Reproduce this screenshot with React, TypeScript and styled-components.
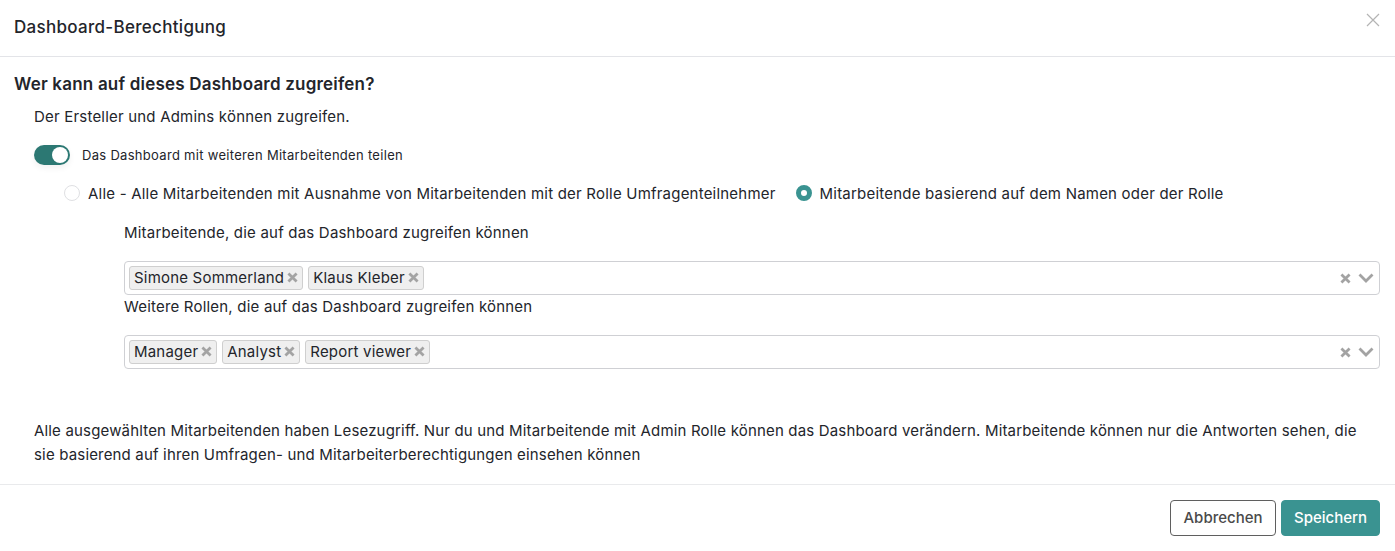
import React from "react";
import styled, { createGlobalStyle } from "styled-components";

const GlobalStyle = createGlobalStyle`
  * {
    box-sizing: border-box;
  }
  body {
    margin: 0;
    background: #fff;
    color: #23252b;
    font-family: Inter, "Liberation Sans", sans-serif;
    -webkit-font-smoothing: antialiased;
  }
`;
const Modal = styled.div`
  display: flex;
  flex-direction: column;
  width: 1395px;
  height: 551px;
  overflow: hidden;
`;
const Header = styled.header`
  display: flex;
  justify-content: space-between;
  align-items: flex-start;
  height: 57px;
  padding: 0 14px;
  border-bottom: 1px solid #e3e4e8;
`;
const Title = styled.h1`
  margin: 17px 0 0;
  font-size: 17px;
  font-weight: 500;
  line-height: 20px;
  letter-spacing: 0.3px;
`;
const CloseButton = styled.button`
  display: flex;
  margin: 13px 1px 0 0;
  padding: 0;
  border: none;
  background: none;
  color: #b4b4b4;
`;
const Body = styled.main`
  flex-grow: 1;
  padding: 16px 14px 0;
`;
const Question = styled.h2`
  margin: 0;
  font-size: 17px;
  font-weight: 600;
  line-height: 22px;
  letter-spacing: 0.2px;
`;
const Indented = styled.div`
  padding-left: 20px;
  font-size: 15px;
  letter-spacing: 0.2px;
`;
const Paragraph = styled.p`
  margin: 11px 0 0;
  line-height: 22px;
`;
const ToggleRow = styled.div`
  display: flex;
  align-items: center;
  gap: 12px;
  margin-top: 17px;
  font-size: 13px;
  letter-spacing: 0.3px;
`;
const Toggle = styled.span`
  display: flex;
  justify-content: flex-end;
  align-items: center;
  width: 36px;
  height: 20px;
  padding: 2px;
  border-radius: 10px;
  background: #2c7873;
  box-shadow: 0 3px 6px rgba(0, 0, 0, 0.06);
`;
const Knob = styled.span`
  width: 16px;
  height: 16px;
  border-radius: 50%;
  background: #fff;
`;
const RadioGroup = styled.div`
  display: flex;
  align-items: center;
  height: 22px;
  margin: 17px 0 0 30px;
  letter-spacing: 0.21px;
`;
const RadioLabel = styled.label`
  display: flex;
  align-items: center;
  gap: 8px;
  margin-right: 20px;
  white-space: nowrap;
`;
const RadioDot = styled.span<{ $checked?: boolean }>`
  width: 16px;
  height: 16px;
  border-radius: 50%;
  background: #fff;
  border: ${p => (p.$checked ? "5px solid #3a9391" : "1px solid #dfe0e3")};
`;
const Fields = styled.div`
  padding-left: 90px;
`;
const FieldLabel = styled.div<{ $first?: boolean }>`
  margin-top: ${p => (p.$first ? "18px" : "1px")};
  line-height: 22px;
`;
const Select = styled.div`
  display: flex;
  align-items: center;
  justify-content: space-between;
  height: 34px;
  margin: 17px 1px 0 0;
  padding: 0 5px 0 4px;
  border: 1px solid #cfd0d4;
  border-radius: 4px;
`;
const Tags = styled.div`
  display: flex;
  gap: 5px;
`;
const Tag = styled.span`
  display: flex;
  align-items: center;
  gap: 3px;
  height: 24px;
  padding: 0 4px 1px;
  border: 1px solid #cfcfcf;
  border-radius: 3px;
  background: #efefef;
  white-space: nowrap;
`;
const SelectIcons = styled.div`
  display: flex;
  align-items: center;
  gap: 7px;
  color: #a3a3a3;
`;
const Notice = styled.p`
  max-width: 1330px;
  margin: 50px 0 0;
  line-height: 24px;
  letter-spacing: 0.17px;
`;
const Footer = styled.footer`
  display: flex;
  justify-content: flex-end;
  gap: 5px;
  height: 67px;
  padding: 15px 15px 0 0;
  border-top: 1px solid #e9eaec;
`;
const Button = styled.button<{ $primary?: boolean }>`
  width: ${p => (p.$primary ? "99px" : "106px")};
  height: 36px;
  padding: 0 0 2px;
  border: 1px solid ${p => (p.$primary ? "#3a9391" : "#5f5f5f")};
  border-radius: 4px;
  background: ${p => (p.$primary ? "#3a9391" : "#fff")};
  color: ${p => (p.$primary ? "#fff" : "#4a4a4a")};
  font-family: inherit;
  font-size: 15px;
  font-weight: 500;
`;
const TagCross = styled.span`
  display: flex;
  color: #a3a3a3;
`;

const Cross = ({ size = 11 }: { size?: number }) => (
  <svg width={size} height={size} viewBox="0 0 10 10" aria-hidden="true">
    <path
      d="M1.3 1.3l7.4 7.4M8.7 1.3l-7.4 7.4"
      stroke="currentColor"
      strokeWidth="2.5"
      fill="none"
    />
  </svg>
);

const MultiSelect = ({ values }: { values: string[] }) => (
  <Select>
    <Tags>
      {values.map(v => (
        <Tag key={v}>
          {v}
          <TagCross>
            <Cross />
          </TagCross>
        </Tag>
      ))}
    </Tags>
    <SelectIcons>
      <Cross />
      <svg width="16" height="10" viewBox="0 0 16 10" aria-hidden="true">
        <path
          d="M1.5 1.5L8 8l6.5-6.5"
          stroke="currentColor"
          strokeWidth="2.8"
          fill="none"
        />
      </svg>
    </SelectIcons>
  </Select>
);

const App = () => (
  <>
    <GlobalStyle />
    <Modal>
      <Header>
        <Title>Dashboard-Berechtigung</Title>
        <CloseButton>
          <svg width="14" height="14" viewBox="0 0 14 14" aria-hidden="true">
            <path
              d="M1 1l12 12M13 1L1 13"
              stroke="currentColor"
              strokeWidth="1.2"
              fill="none"
            />
          </svg>
        </CloseButton>
      </Header>
      <Body>
        <Question>Wer kann auf dieses Dashboard zugreifen?</Question>
        <Indented>
          <Paragraph>Der Ersteller und Admins können zugreifen.</Paragraph>
          <ToggleRow>
            <Toggle>
              <Knob />
            </Toggle>
            Das Dashboard mit weiteren Mitarbeitenden teilen
          </ToggleRow>
          <RadioGroup>
            <RadioLabel>
              <RadioDot />
              Alle - Alle Mitarbeitenden mit Ausnahme von Mitarbeitenden mit der
              Rolle Umfragenteilnehmer
            </RadioLabel>
            <RadioLabel>
              <RadioDot $checked />
              Mitarbeitende basierend auf dem Namen oder der Rolle
            </RadioLabel>
          </RadioGroup>
          <Fields>
            <FieldLabel $first>
              Mitarbeitende, die auf das Dashboard zugreifen können
            </FieldLabel>
            <MultiSelect values={["Simone Sommerland", "Klaus Kleber"]} />
            <FieldLabel>
              Weitere Rollen, die auf das Dashboard zugreifen können
            </FieldLabel>
            <MultiSelect values={["Manager", "Analyst", "Report viewer"]} />
          </Fields>
          <Notice>
            Alle ausgewählten Mitarbeitenden haben Lesezugriff. Nur du und
            Mitarbeitende mit Admin Rolle können das Dashboard verändern.
            Mitarbeitende können nur die Antworten sehen, die sie basierend auf
            ihren Umfragen- und Mitarbeiterberechtigungen einsehen können
          </Notice>
        </Indented>
      </Body>
      <Footer>
        <Button>Abbrechen</Button>
        <Button $primary>Speichern</Button>
      </Footer>
    </Modal>
  </>
);

export default App;
